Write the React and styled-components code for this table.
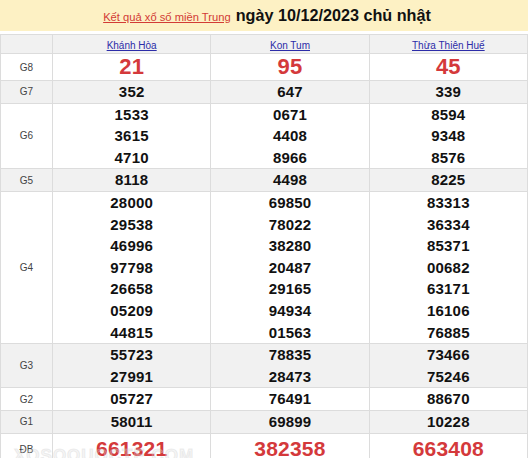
import React from "react";
import styled, { createGlobalStyle } from "styled-components";

const GlobalStyle = createGlobalStyle`
	body {
		margin: 0;
		background: #fff;
		font-family: "Liberation Sans", Arial, sans-serif;
	}
`;

const Wrapper = styled.div`
	position: relative;
	width: 528px;
	overflow: hidden;
	height: 458px;
`;

const Title = styled.div`
	background-color: #fdf1c4;
	height: 31px;
	display: flex;
	align-items: center;
	justify-content: center;
	gap: 5px;
	margin-bottom: 3px;
	padding-left: 6px;

	a {
		color: #d23b35;
		font-size: 11.2px;
		text-decoration: underline;
		margin-top: 2px;
	}

	h2 {
		margin: 0;
		font-size: 16.2px;
		font-weight: bold;
		color: #111;
	}
`;

const Table = styled.table`
	width: 528px;
	border-collapse: collapse;
	table-layout: fixed;

	td,
	th {
		border: solid #dcdcdc 1px;
		padding: 0;
		text-align: center;
		vertical-align: middle;
	}

	col.label {
		width: 52px;
	}
`;

const HeadRow = styled.tr`
	background-color: #f1f1f1;
	height: 19px;

	a {
		color: #2c2ca8;
		font-size: 10px;
		font-weight: normal;
		text-decoration: underline;
	}
`;

const Row = styled.tr`
	background-color: ${(props) => (props.$gray ? "#f1f1f1" : "#fff")};
	height: ${(props) => props.$height || 22}px;
`;

const Label = styled.td`
	font-size: 10px;
	color: #444;
`;

const Num = styled.div`
	font-weight: bold;
	color: ${(props) => (props.$big ? "#d4393b" : "#111")};
	font-size: ${(props) => props.$size || 15}px;
	line-height: ${(props) => (props.$big ? "26px" : "21.6px")};
	letter-spacing: 0.2px;
`;

const Watermark = styled.div`
	position: absolute;
	left: 14px;
	bottom: -8px;
	font-size: 17px;
	font-weight: bold;
	letter-spacing: 1px;
	color: rgba(220, 220, 220, 0.25);
	-webkit-text-stroke: 1px rgba(205, 205, 205, 0.35);
	pointer-events: none;
`;

const provinces = ["Khánh Hòa", "Kon Tum", "Thừa Thiên Huế"];

const results = [
	{ name: "G8", big: true, size: 22, height: 26, data: [["21"], ["95"], ["45"]] },
	{ name: "G7", data: [["352"], ["647"], ["339"]] },
	{
		name: "G6",
		data: [
			["1533", "3615", "4710"],
			["0671", "4408", "8966"],
			["8594", "9348", "8576"],
		],
	},
	{ name: "G5", data: [["8118"], ["4498"], ["8225"]] },
	{
		name: "G4",
		data: [
			["28000", "29538", "46996", "97798", "26658", "05209", "44815"],
			["69850", "78022", "38280", "20487", "29165", "94934", "01563"],
			["83313", "36334", "85371", "00682", "63171", "16106", "76885"],
		],
	},
	{
		name: "G3",
		data: [
			["55723", "27991"],
			["78835", "28473"],
			["73466", "75246"],
		],
	},
	{ name: "G2", data: [["05727"], ["76491"], ["88670"]] },
	{ name: "G1", data: [["58011"], ["69899"], ["10228"]] },
	{ name: "ĐB", big: true, size: 21, height: 32, data: [["661321"], ["382358"], ["663408"]] },
];

export default function App() {
	return (
		<Wrapper>
			<GlobalStyle />
			<Title>
				<a href="#">Kết quả xổ số miền Trung</a>
				<h2>ngày 10/12/2023 chủ nhật</h2>
			</Title>
			<Table>
				<colgroup>
					<col className="label" />
					<col />
					<col />
					<col />
				</colgroup>
				<tbody>
					<HeadRow>
						<th></th>
						{provinces.map((p) => (
							<th key={p}>
								<a href="#">{p}</a>
							</th>
						))}
					</HeadRow>
					{results.map((row, index) => (
						<Row key={row.name} $gray={index % 2 === 1} $height={row.height}>
							<Label>{row.name}</Label>
							{row.data.map((cell, i) => (
								<td key={i}>
									{cell.map((n, j) => (
										<Num key={j} $big={row.big} $size={row.size}>
											{n}
										</Num>
									))}
								</td>
							))}
						</Row>
					))}
				</tbody>
			</Table>
			<Watermark>XOSOQUOCTE.COM</Watermark>
		</Wrapper>
	);
}
